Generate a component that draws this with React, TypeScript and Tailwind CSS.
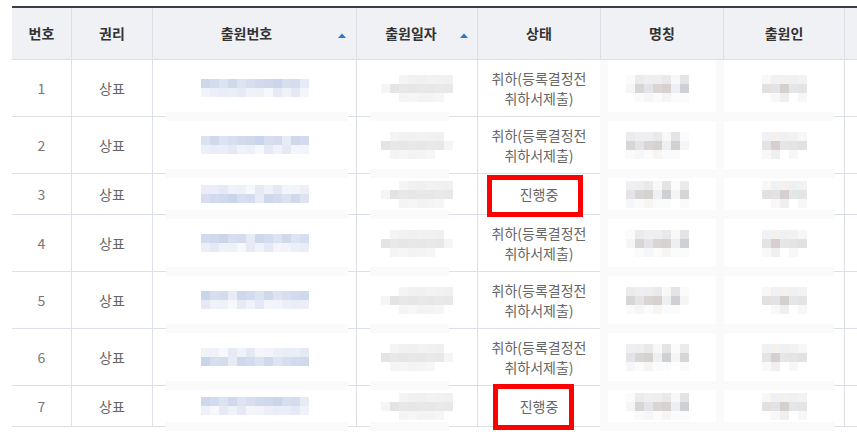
import React from "react";

type Row = { no: number; status: "withdrawn" | "progress"; box?: "a" | "b" };

const rows: Row[] = [
  { no: 1, status: "withdrawn" },
  { no: 2, status: "withdrawn" },
  { no: 3, status: "progress", box: "a" },
  { no: 4, status: "withdrawn" },
  { no: 5, status: "withdrawn" },
  { no: 6, status: "withdrawn" },
  { no: 7, status: "progress", box: "b" },
];

// mosaic colour sets for the blurred-out cells
const numTop = ["#cdd8ea", "#d3dcee", "#dbe2f0", "#cfd9eb", "#dde3f1", "#d6def0", "#d2dbed", "#d0d9ec", "#c9d5ea", "#d6def0", "#d4dcee", "#e6ebf6"];
const numBot = ["#f2f4fa", "#eceff8", "#e9edf7", "#eaeef8", "#e5e9f5", "#f0f2f9", "#eef1f8", "#f7f8fc", "#e6eaf5", "#eff2f9", "#e4e9f5", "#f3f5fb"];

const dateGrid = [
  ["#ffffff", "#ffffff", "#f4f4f4", "#f1f1f1", "#f0f0f0", "#f2f2f2", "#f1f1f0", "#f0f0f0"],
  ["#f6f5f4", "#e4e4e4", "#e8e8e8", "#e6e6e6", "#e8e8e8", "#e7e7e7", "#e9e9e9", "#e8e8e8"],
  ["#ffffff", "#ffffff", "#f4f4f4", "#f5f6f5", "#f3f3f3", "#f4f4f4", "#f6f6f6", "#ffffff"],
];

const nameGrid = [
  ["#fbfbfb", "#ebebed", "#efeff1", "#eeeef0", "#e9e9eb", "#f8f8f6", "#e4e4e6"],
  ["#f5f5f5", "#d8d6d5", "#e4e4e8", "#d8d5d4", "#d6d2d0", "#edf0f2", "#cfd0d4"],
  ["#ffffff", "#fafafa", "#f5f6f8", "#fbfbfb", "#f7f5f4", "#fafbfc", "#fbfbfb"],
];

const ownerGrid = [
  ["#f9f7f6", "#f0f1f4", "#f3f0ee", "#eef0f2", "#f2f2f3"],
  ["#e3e1e0", "#e3e3e5", "#d5d0cf", "#e5e6e8", "#e3e4e6"],
  ["#ffffff", "#f8f8f8", "#efefef", "#ffffff", "#f7f7f7"],
];

const shift = <T,>(arr: T[], n: number) => arr.map((_, i) => arr[(i + n) % arr.length]);

const Mosaic = ({ grid }: { grid: string[][] }) => (
  <div className="relative z-30 flex flex-col">
    {grid.map((line, i) => (
      <div key={i} className="flex">
        {line.map((c, j) => (
          <div key={j} className="w-[9px] h-[9px]" style={{ backgroundColor: c }} />
        ))}
      </div>
    ))}
  </div>
);

const SortIcon = () => (
  <svg width="8" height="5" viewBox="0 0 8 5" className="shrink-0">
    <path d="M0 5 L4 0.5 L8 5 Z" fill="#2b78c8" />
  </svg>
);

const cellBase = "flex items-center justify-center border-r border-[#dcdee8] shrink-0";

const App = () => {
  return (
    <div
      className="w-[857px] h-[443px] overflow-hidden bg-white pt-[6px] pl-[12px]"
      style={{ fontFamily: '"Malgun Gothic", "Noto Sans CJK KR", "Noto Sans", sans-serif' }}
    >
      <div className="w-[960px] border-t-2 border-[#3a3e47]">
        {/* Header */}
        <div className="flex h-[52px] bg-[#f0f1f5] border-b border-[#dcdee8] text-[14px] font-bold text-[#333]">
          <div className={`${cellBase} w-[60px]`}>번호</div>
          <div className={`${cellBase} w-[81px]`}>권리</div>
          <div className={`${cellBase} w-[204px] relative`}>
            <span className="pr-[16px]">출원번호</span>
            <span className="absolute right-[10px] top-[25px] flex">
              <SortIcon />
            </span>
          </div>
          <div className={`${cellBase} w-[121px] relative`}>
            <span className="pr-[12px]">출원일자</span>
            <span className="absolute right-[9px] top-[25px] flex">
              <SortIcon />
            </span>
          </div>
          <div className={`${cellBase} w-[123px]`}>상태</div>
          <div className={`${cellBase} w-[123px]`}>명칭</div>
          <div className={`${cellBase} w-[121px]`}>출원인</div>
          <div className="flex-1" />
        </div>

        {/* Body */}
        {rows.map((r, idx) => {
          const h = r.status === "withdrawn" ? "h-[57px]" : "h-[41px]";
          return (
            <div key={r.no} className={`flex ${h} border-b border-[#dcdee8] text-[14px] text-[#666]`}>
              <div className={`${cellBase} w-[60px] text-[#777]`}>{r.no}</div>
              <div className={`${cellBase} w-[81px]`}>상표</div>
              <div className={`${cellBase} w-[204px] relative`}>
                <Mosaic
                  grid={
                    idx % 3 === 2
                      ? [shift(numBot, idx), shift(numTop, idx + 3)]
                      : [shift(numTop, idx * 2), shift(numBot, idx)]
                  }
                />
                {/* blur patch edge over the row line */}
                <div className="absolute left-[13px] w-[182px] bottom-[-5px] h-[9px] bg-[#fafafa] z-20" />
              </div>
              <div className={`${cellBase} w-[121px] relative`}>
                <Mosaic grid={dateGrid.map((l) => shift(l, idx % 2))} />
                <div className="absolute left-[13px] w-[79px] bottom-[-5px] h-[9px] bg-[#fafafa] z-20" />
              </div>
              <div className={`${cellBase} w-[123px] relative`}>
                {r.status === "withdrawn" ? (
                  <div className="text-center leading-[20px]">
                    취하(등록결정전
                    <br />
                    취하서제출)
                  </div>
                ) : (
                  <span>진행중</span>
                )}
                {r.box === "a" && (
                  <div className="absolute left-[9px] top-[1px] w-[96px] h-[42px] border-[5px] border-[#ff0000] z-40" />
                )}
                {r.box === "b" && (
                  <div className="absolute left-[15px] top-[-2px] w-[81px] h-[46px] border-[5px] border-[#ff0000] z-40" />
                )}
              </div>
              <div className={`${cellBase} w-[123px] pr-[10px] relative`}>
                {/* blur patch spanning 명칭 + 출원인 */}
                <div className="absolute left-[-1px] top-0 bottom-[-1px] w-[234px] bg-white z-10">
                  <div className="absolute left-0 top-0 bottom-0 w-[8px] bg-[#fafafa]" />
                  <div className="absolute left-[116px] top-0 bottom-0 w-[8px] bg-[#fafafa]" />
                </div>
                <div className="absolute left-[-1px] w-[234px] bottom-[-5px] h-[9px] bg-[#fafafa] z-20" />
                <Mosaic grid={nameGrid.map((l) => shift(l, idx % 3))} />
              </div>
              <div className={`${cellBase} w-[121px]`}>
                <Mosaic grid={ownerGrid.map((l) => shift(l, idx % 2))} />
              </div>
              <div className="flex-1" />
            </div>
          );
        })}
      </div>
    </div>
  );
};

export default App;
